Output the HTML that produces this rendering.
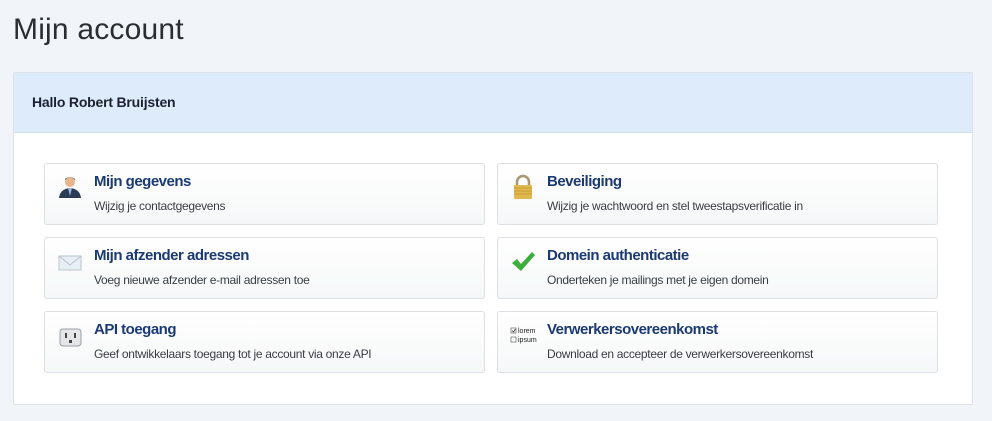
<!DOCTYPE html>
<html><head><meta charset="utf-8"><style>
body{margin:0;background:#f1f4f8;font-family:"Liberation Sans",sans-serif;width:992px;height:421px;overflow:hidden;position:relative}
h1{position:absolute;left:13px;top:13px;margin:0;font-weight:normal;font-size:30px;color:#2a2e33;letter-spacing:0.2px}
.panel{position:absolute;left:13px;top:72px;width:958px;height:331px;background:#fff;border:1px solid #dde3ea;border-radius:2px}
.hdr{height:59px;background:#deebfa;border-bottom:1px solid #d3e0ef;font-weight:bold;font-size:14px;color:#1c2130;line-height:59px;padding-left:18px;letter-spacing:-0.2px}
.card{position:absolute;width:439px;height:60px;background:linear-gradient(#fff,#f6f7f8);border:1px solid #dcdfe3;border-radius:3px}
.card .t{position:absolute;left:49px;top:9px;font-weight:bold;font-size:15px;color:#1b3a72;letter-spacing:-0.5px}
.card .s{position:absolute;left:49px;top:35px;font-size:12px;color:#3a3d42;letter-spacing:-0.3px}
.ic{position:absolute;left:12px;top:10px;width:26px;height:26px}
</style></head><body>
<h1>Mijn account</h1>
<div class="panel"><div class="hdr">Hallo Robert Bruijsten</div></div>

<div class="card" style="left:44px;top:163px">
<svg class="ic" viewBox="0 0 26 26"><circle cx="13" cy="8" r="5" fill="#e8b48c"/><path d="M8 6 Q13 0 18 6 L18 5 Q13 1 8 5Z" fill="#333"/><path d="M2 24 Q3 15 13 14 Q23 15 24 24Z" fill="#2b3a55"/><path d="M11 14 L13 22 L15 14Z" fill="#9bb7dd"/></svg>
<div class="t">Mijn gegevens</div><div class="s">Wijzig je contactgegevens</div></div>

<div class="card" style="left:497px;top:163px">
<svg class="ic" viewBox="0 0 26 26"><path d="M7 12 V8 a6 6 0 0 1 12 0 V12" fill="none" stroke="#a89870" stroke-width="2.5"/><rect x="4" y="11" width="18" height="14" rx="1" fill="#e0b850"/><path d="M4 14h18M4 17h18M4 20h18" stroke="#c99d35" stroke-width="1"/></svg>
<div class="t">Beveiliging</div><div class="s">Wijzig je wachtwoord en stel tweestapsverificatie in</div></div>

<div class="card" style="left:44px;top:237px">
<svg class="ic" viewBox="0 0 26 26"><rect x="2" y="8" width="22" height="14" fill="#e8eff2" stroke="#b7c6cc"/><path d="M2 8 L13 17 L24 8" fill="none" stroke="#b7c6cc"/></svg>
<div class="t">Mijn afzender adressen</div><div class="s">Voeg nieuwe afzender e-mail adressen toe</div></div>

<div class="card" style="left:497px;top:237px">
<svg class="ic" viewBox="0 0 26 26"><path d="M2 15 L7 11 L11 16 L22 4 L25 7 L11 23Z" fill="#3cae3c"/></svg>
<div class="t">Domein authenticatie</div><div class="s">Onderteken je mailings met je eigen domein</div></div>

<div class="card" style="left:44px;top:311px">
<svg class="ic" viewBox="0 0 26 26"><rect x="3" y="7" width="21" height="17" rx="3" fill="#e4e6e8" stroke="#9a9ea3"/><rect x="8" y="11" width="2" height="5" fill="#444"/><rect x="17" y="11" width="2" height="5" fill="#444"/><rect x="12" y="18" width="3" height="3" fill="#444"/></svg>
<div class="t">API toegang</div><div class="s">Geef ontwikkelaars toegang tot je account via onze API</div></div>

<div class="card" style="left:497px;top:311px">
<svg class="ic" viewBox="0 0 30 26" style="width:30px;left:12px"><rect x="1" y="6" width="5" height="5" fill="#fff" stroke="#666" stroke-width=".7"/><path d="M2 8.5l1.5 1.5 2-3" stroke="#333" fill="none" stroke-width=".8"/><rect x="1" y="15" width="5" height="5" fill="#fff" stroke="#666" stroke-width=".7"/><text x="8" y="11" font-size="7" font-family="Liberation Sans" fill="#222">lorem</text><text x="8" y="20" font-size="7" font-family="Liberation Sans" fill="#222">ipsum</text></svg>
<div class="t">Verwerkersovereenkomst</div><div class="s">Download en accepteer de verwerkersovereenkomst</div></div>
</body></html>
